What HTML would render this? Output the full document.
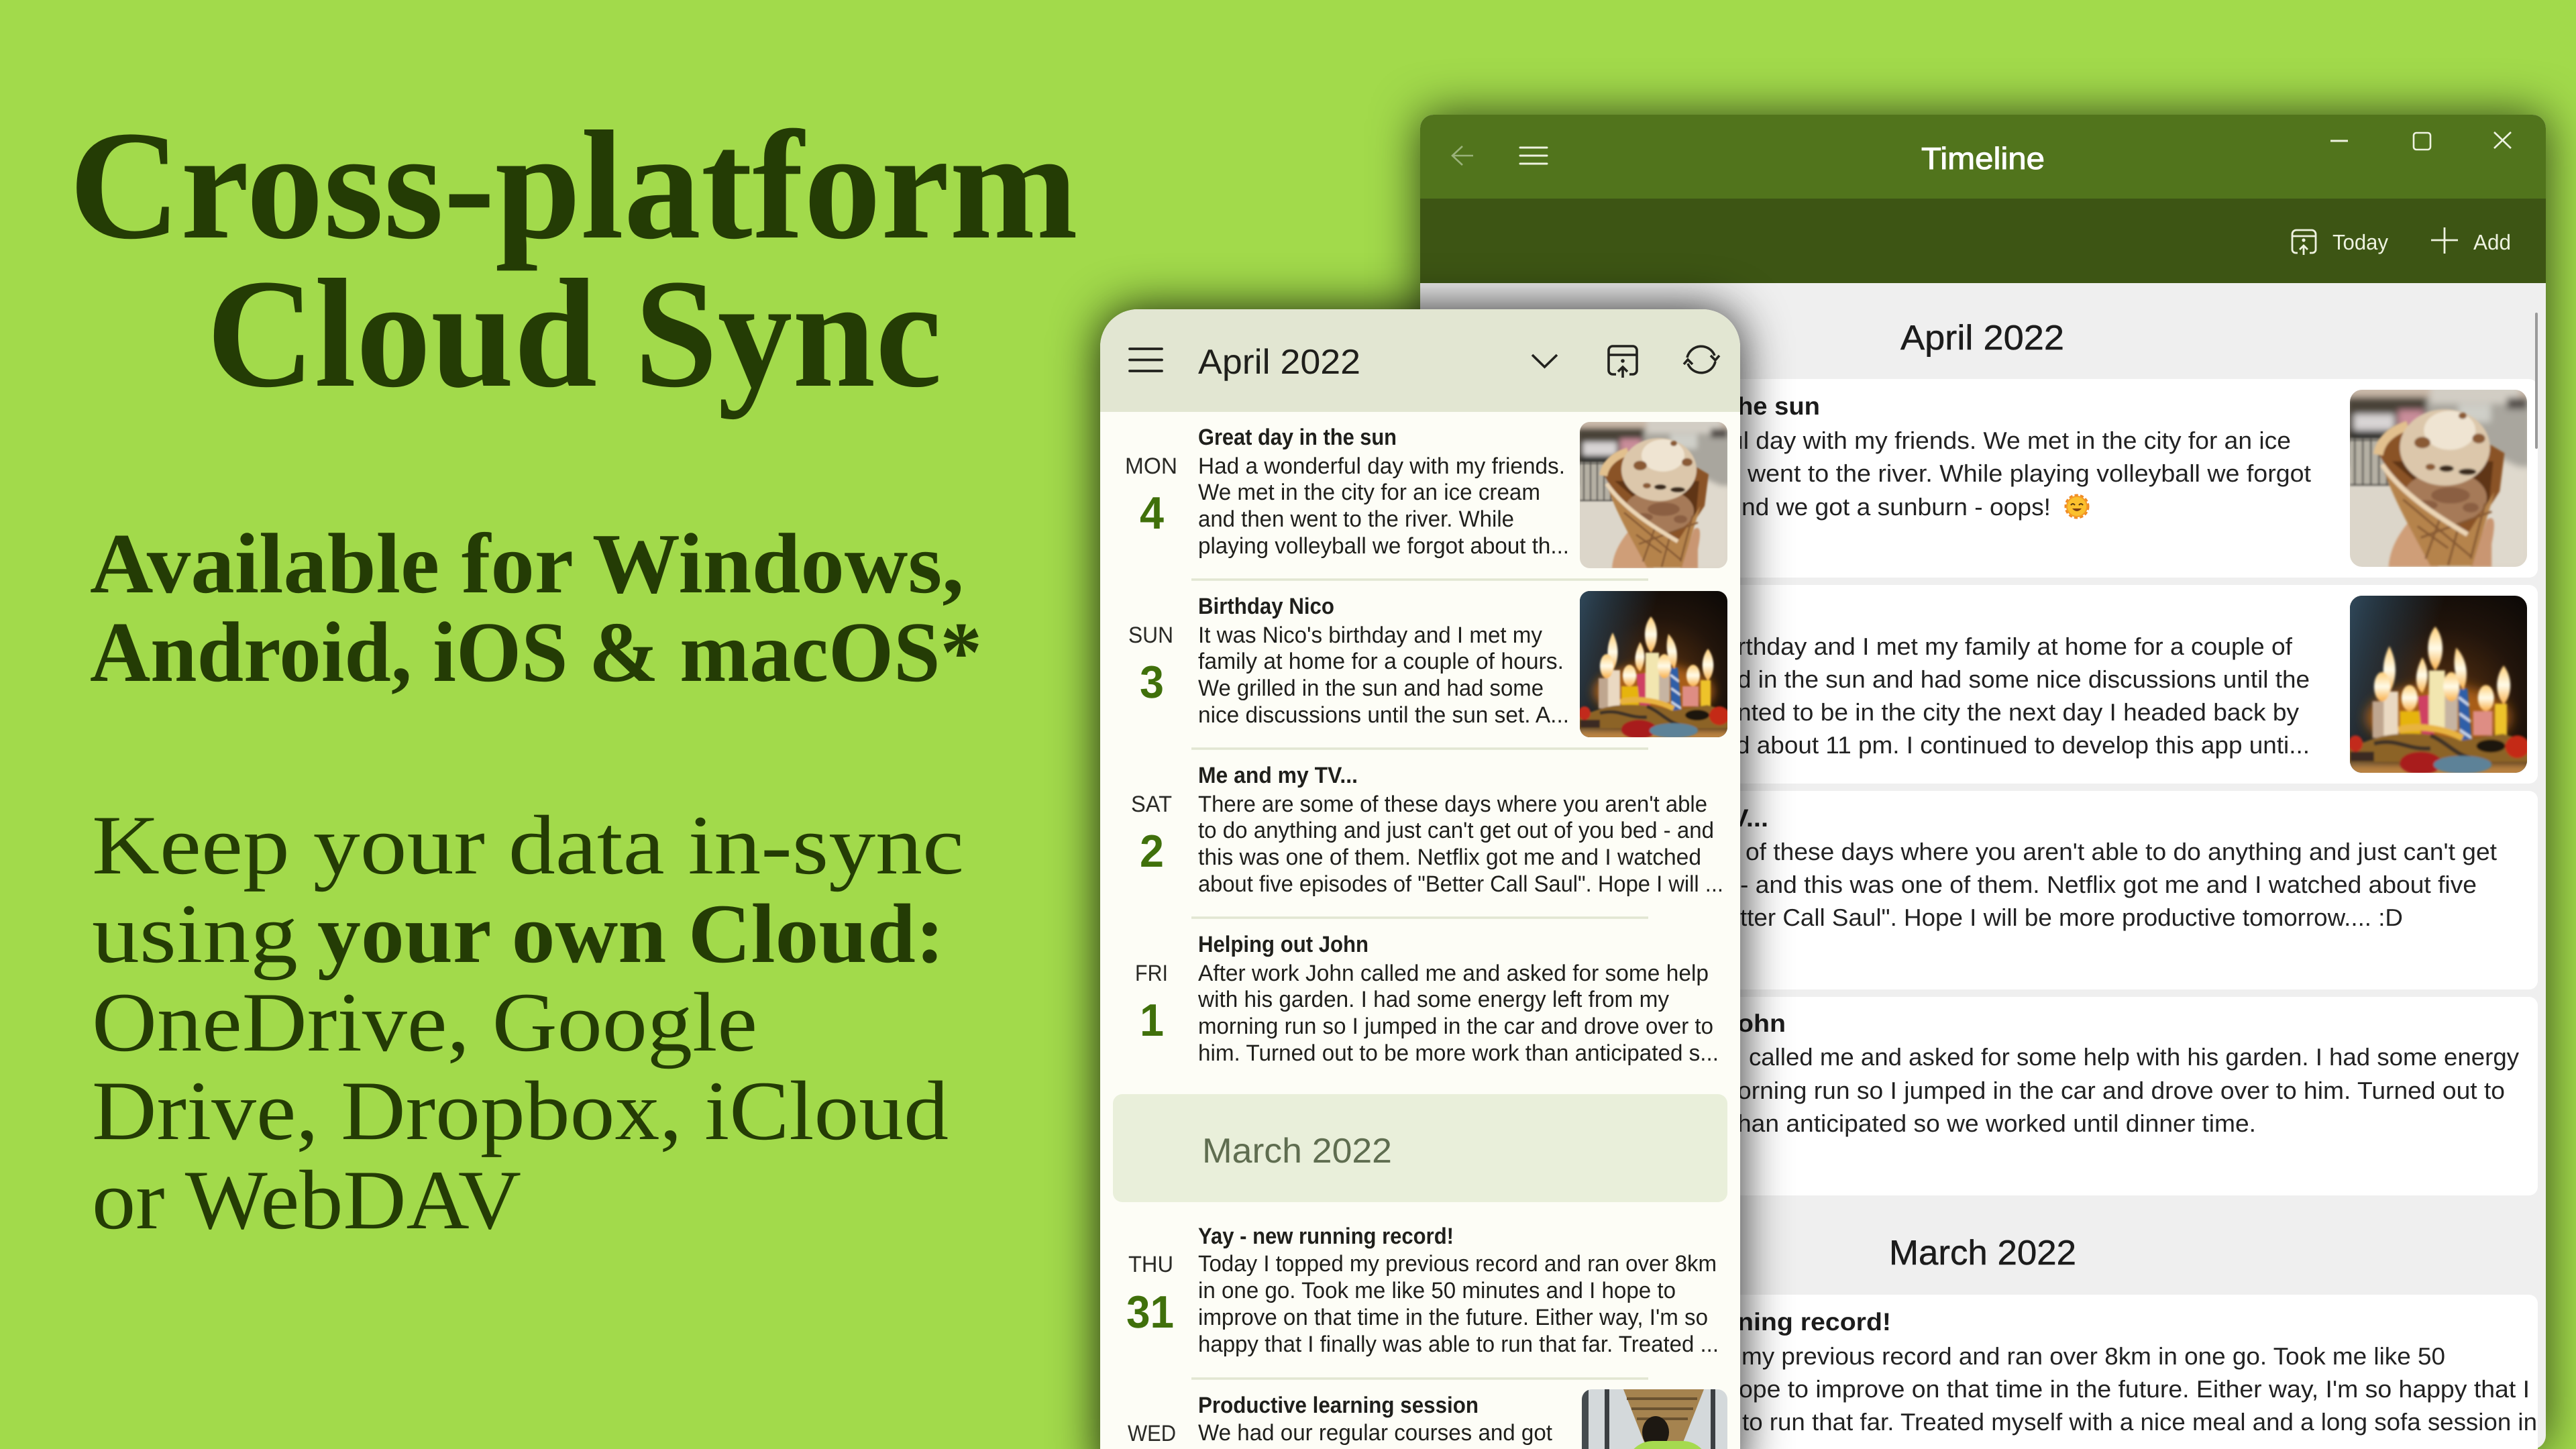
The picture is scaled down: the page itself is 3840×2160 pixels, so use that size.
<!DOCTYPE html>
<html lang="en"><head><meta charset="utf-8"><title>Cross-platform Cloud Sync</title>
<style>
html,body{margin:0;padding:0;width:3840px;height:2160px;overflow:hidden;background:#a2da4b}
#root{position:absolute;left:0;top:0;width:3840px;height:2160px;overflow:hidden;background:#a2da4b}
.l{position:absolute;left:0;top:0;width:3840px;height:2160px;display:block}
svg text{text-rendering:geometricPrecision;white-space:pre}
.s{font-family:"Liberation Serif",serif;fill:#243c05}
.h1{font-size:232px;font-weight:700}.h2{font-size:128px;font-weight:700}.h3{font-size:126px}.b{font-weight:700}
.a{font-family:"Liberation Sans",sans-serif;fill:#1f1f1b}
.t{font-size:34px;font-weight:700}.p{font-size:34px}.d{font-size:34px;fill:#2a2a26}.n{font-size:68px;font-weight:700;fill:#40700b}
.m{font-size:52px}.wt{font-size:37px;font-weight:700;fill:#1c1c1c}.wp{font-size:36px;fill:#222}.wm{font-size:52px;fill:#1c1c1c;stroke:#1c1c1c;stroke-width:.5}
#win{position:absolute;left:2117px;top:171px;width:1678px;height:1989px;background:#efefef;border-radius:20px;box-shadow:0 0 70px rgba(0,0,0,.7);overflow:hidden}
#tb{height:125px;background:#51741c}#tl{height:126px;background:#3d5514}
#ph{position:absolute;left:1640px;top:461px;width:954px;height:1760px;background:#fdfdf6;border-radius:56px;box-shadow:0 0 70px rgba(0,0,0,.85);overflow:hidden}
#phh{height:153px;background:#e2e6d2}
</style></head><body><div id="root">

<svg class="l" viewBox="0 0 3840 2160" xmlns="http://www.w3.org/2000/svg">
<defs>
<filter id="f1" x="-10%" y="-10%" width="120%" height="120%"><feGaussianBlur stdDeviation="4"/></filter>
<filter id="f2" x="-10%" y="-10%" width="120%" height="120%"><feGaussianBlur stdDeviation="1.300"/></filter>
<filter id="f4" x="-100%" y="-100%" width="300%" height="300%"><feGaussianBlur stdDeviation="7"/></filter>
<clipPath id="rc"><rect width="220" height="218" rx="15"/></clipPath>
<radialGradient id="cb" cx=".55" cy=".6" r=".7"><stop offset="0" stop-color="#5a3210"/><stop offset=".6" stop-color="#21140b"/><stop offset="1" stop-color="#0e0a07"/></radialGradient>
<linearGradient id="cl" x1="0" x2="1" y1="0" y2=".3"><stop offset="0" stop-color="#30485a"/><stop offset=".5" stop-color="#30485a" stop-opacity="0"/></linearGradient>
<linearGradient id="fl" x1="0" x2="0" y1="0" y2="1"><stop offset="0" stop-color="#ffcf78"/><stop offset=".5" stop-color="#fffbe8"/><stop offset="1" stop-color="#f9b04a"/></linearGradient>
<symbol id="ice" viewBox="0 0 220 218" preserveAspectRatio="none">
<g clip-path="url(#rc)">
<rect width="220" height="218" fill="#dcd6ca"/>
<g filter="url(#f1)">
<rect x="-5" y="-5" width="230" height="100" fill="#a9a69e"/>
<rect x="-5" y="-5" width="100" height="70" fill="#4a4238"/>
<rect x="-5" y="-5" width="230" height="14" fill="#c9b8a8"/>
<rect x="100" y="-5" width="110" height="22" fill="#d2cdc4"/>
<rect x="5" y="30" width="50" height="22" fill="#d8d4d4"/>
<rect x="60" y="25" width="32" height="22" fill="#c98d9a"/>
<rect x="0" y="50" width="70" height="15" fill="#2a2a26"/>
<rect x="135" y="18" width="40" height="22" fill="#cfcfc8"/>
<rect x="195" y="10" width="25" height="14" fill="#55504c"/>
<polygon points="160,72 220,100 220,218 140,218" fill="#dfd9cd"/>
</g>
<g filter="url(#f2)">
<rect x="0" y="60" width="50" height="58" fill="#b5b0a4"/>
<g stroke="#4b4a44" stroke-width="2"><path d="M6 60V116M16 60V116M26 60V116M36 60V116M46 60V116M0 117H50M0 62H50"/></g>
<path d="M48 218C50 190 66 170 84 150L110 218Z" fill="#cf9e78"/>
<path d="M150 218L170 160C182 152 180 170 176 190L176 218Z" fill="#c99672"/>
<path d="M35 78C38 62 52 50 72 44L120 40 165 62 192 78 186 125 150 180 90 170Z" fill="#8a5226"/>
<path d="M52 88L178 88 172 150 100 130Z" fill="#5f3418"/>
<ellipse cx="118" cy="133" rx="52" ry="33" fill="#a67a58"/>
<g fill="#8b5f42"><ellipse cx="125" cy="130" rx="24" ry="10"/><ellipse cx="95" cy="142" rx="14" ry="6"/><ellipse cx="150" cy="145" rx="10" ry="6"/></g>
<path d="M40 92C66 130 112 158 146 178L180 125 190 92 152 217 100 217C76 172 52 132 40 92Z" fill="#b5834c"/>
<g stroke="#835630" stroke-width="2.500" fill="none"><path d="M66 135L150 205M84 168L122 195M112 158L94 208M134 172L122 216M168 140L150 208M88 182L176 150"/></g>
<path d="M40 92C66 130 112 158 146 178" stroke="#ecd6b6" stroke-width="6" fill="none"/>
<path d="M35 80C38 62 52 50 72 44" stroke="#e2c08e" stroke-width="12" fill="none"/>
<ellipse cx="118" cy="71" rx="56" ry="47" fill="#dcc7ab"/>
<ellipse cx="124" cy="50" rx="32" ry="24" fill="#efe4d2"/>
<g fill="#3b2a1e"><ellipse cx="120" cy="97" rx="9" ry="4"/><ellipse cx="146" cy="101" rx="11" ry="4"/></g>
<g fill="#8a5a35"><ellipse cx="140" cy="32" rx="5" ry="4"/><ellipse cx="160" cy="60" rx="8" ry="6"/><ellipse cx="90" cy="65" rx="10" ry="7"/><ellipse cx="100" cy="95" rx="6" ry="4"/></g>
</g></g>
</symbol>
<symbol id="cnd" viewBox="0 0 220 218" preserveAspectRatio="none">
<g clip-path="url(#rc)">
<rect width="220" height="218" fill="url(#cb)"/>
<rect width="220" height="218" fill="url(#cl)"/>
<g filter="url(#f4)"><ellipse cx="110" cy="150" rx="90" ry="40" fill="#c06a18" opacity=".8"/><rect x="-10" y="205" width="240" height="24" fill="#c58a45"/></g>
<g filter="url(#f2)">
<rect x="38" y="118" width="22" height="58" fill="#ead9c2"/><rect x="28" y="130" width="14" height="45" fill="#bfa68f"/>
<rect x="62" y="142" width="26" height="30" fill="#e6b40e"/>
<polygon points="84,124 99,122 105,170 90,174" fill="#cf3f63"/>
<rect x="98" y="92" width="20" height="72" fill="#f2e6b0"/>
<rect x="118" y="120" width="16" height="46" fill="#c6b4a2"/>
<polygon points="134,115 146,114 152,186 137,186" fill="#2e5ea8"/>
<path d="M135 125L148 135M136 145L150 155M136 165L151 175" stroke="#cfdcee" stroke-width="3"/>
<rect x="153" y="142" width="24" height="30" fill="#de8d84"/>
<rect x="180" y="133" width="15" height="46" fill="#eec32a"/>
<path d="M-5 188L30 176C60 165 110 170 140 178L190 170 225 180V205H-5Z" fill="#8c6428"/>
<path d="M30 182C60 175 70 190 100 188M100 172C120 180 130 195 150 200" stroke="#3c3226" stroke-width="5" fill="none"/>
<path d="M60 165C90 158 120 165 140 175" stroke="#e8b340" stroke-width="8" fill="none"/>
<ellipse cx="175" cy="185" rx="18" ry="8" fill="#1c1510"/>
<ellipse cx="88" cy="206" rx="26" ry="14" fill="#a81a1a"/>
<ellipse cx="208" cy="186" rx="15" ry="14" fill="#c42a12"/>
<ellipse cx="7" cy="182" rx="9" ry="10" fill="#c22a1e"/>
<ellipse cx="140" cy="208" rx="36" ry="11" fill="#5d8298"/>
<path d="M0 192H30V204H0Z" fill="#3b2a20"/>
<g fill="url(#fl)">
<path d="M49 62C58 80 60 100 49 120 38 100 40 80 49 62Z"/>
<ellipse cx="40" cy="112" rx="10" ry="18"/>
<ellipse cx="74" cy="126" rx="10" ry="16"/>
<path d="M90 76C98 90 99 105 90 120 79 112 81 92 90 76Z"/>
<path d="M106 38C118 52 118 78 106 92 94 78 94 52 106 38Z"/>
<ellipse cx="126" cy="112" rx="10" ry="18"/>
<path d="M132 64C146 78 148 100 141 116 130 102 127 84 132 64Z"/>
<ellipse cx="169" cy="126" rx="10" ry="16"/>
<path d="M191 86C202 100 202 122 191 134 180 122 180 100 191 86Z"/>
</g></g>
</g>
</symbol>
</defs>
<g class="s">
<text class="h1" x="103" y="354" textLength="1504" lengthAdjust="spacingAndGlyphs">Cross-platform</text>
<text class="h1" x="308" y="575" textLength="1096" lengthAdjust="spacingAndGlyphs">Cloud Sync</text>
<text class="h2" x="134" y="883" textLength="1303" lengthAdjust="spacingAndGlyphs">Available for Windows,</text>
<text class="h2" x="134" y="1015" textLength="1330" lengthAdjust="spacingAndGlyphs">Android, iOS &amp; macOS*</text>
<text class="h3" x="137" y="1302" textLength="1300" lengthAdjust="spacingAndGlyphs">Keep your data in-sync</text>
<text class="h3" x="137" y="1434" textLength="307" lengthAdjust="spacingAndGlyphs">using</text>
<text class="h3 b" x="473" y="1434" textLength="935" lengthAdjust="spacingAndGlyphs">your own Cloud:</text>
<text class="h3" x="137" y="1566" textLength="992" lengthAdjust="spacingAndGlyphs">OneDrive, Google</text>
<text class="h3" x="137" y="1698" textLength="1277" lengthAdjust="spacingAndGlyphs">Drive, Dropbox, iCloud</text>
<text class="h3" x="137" y="1831" textLength="640" lengthAdjust="spacingAndGlyphs">or WebDAV</text>
</g>
</svg>

<div id="win"><div id="tb"></div><div id="tl"></div></div>

<svg class="l" viewBox="0 0 3840 2160" xmlns="http://www.w3.org/2000/svg">
<path d="M2196 232H2165M2180 218L2165 232 2180 246" fill="none" stroke="#9ab27a" stroke-width="2.600"/>
<path d="M2266 220H2306M2266 232H2306M2266 244H2306" stroke="#eef2e0" stroke-width="3" stroke-linecap="round"/>
<text class="a" x="2864" y="252" font-size="46" stroke="#fff" stroke-width="1" style="fill:#fff" textLength="184" lengthAdjust="spacingAndGlyphs">Timeline</text>
<path d="M3474 210H3500" stroke="#eef2e0" stroke-width="3"/>
<rect x="3598" y="198" width="25" height="25" rx="4" fill="none" stroke="#eef2e0" stroke-width="2.600"/>
<path d="M3718 197L3743 221M3743 197L3718 221" stroke="#eef2e0" stroke-width="2.600"/>
<g fill="none" stroke="#eef2e0" stroke-width="2.800">
<path d="M3425 377H3422a5 5 0 0 1-5-5V349a6 6 0 0 1 6-6H3446a6 6 0 0 1 6 6V372a5 5 0 0 1-5 5H3443"/>
<path d="M3417 352H3452M3434 380V367M3428 372L3434 366 3440 372M3624 358H3664M3644 339V378"/>
</g>
<circle cx="3434" cy="358" r="2.600" fill="#eef2e0"/>
<text class="a" x="3477" y="372" font-size="32" style="fill:#eef2e0" textLength="83" lengthAdjust="spacingAndGlyphs">Today</text>
<text class="a" x="3687" y="372" font-size="32" style="fill:#eef2e0" textLength="56" lengthAdjust="spacingAndGlyphs">Add</text>
<g fill="#fff">
<rect x="2140" y="565" width="1643" height="296" rx="13"/>
<rect x="2140" y="872" width="1643" height="296" rx="13"/>
<rect x="2140" y="1179" width="1643" height="296" rx="13"/>
<rect x="2140" y="1486" width="1643" height="296" rx="13"/>
<rect x="2140" y="1930" width="1643" height="300" rx="13"/>
</g>
<rect x="3779" y="466" width="4" height="203" rx="2" fill="#9a9a9a"/>
<text class="a wm" x="2833" y="521" textLength="244" lengthAdjust="spacingAndGlyphs">April 2022</text>
<text class="a wm" x="2816" y="1885" textLength="279" lengthAdjust="spacingAndGlyphs">March 2022</text>
<use href="#ice" x="3503" y="581" width="264" height="264"/>
<use href="#cnd" x="3503" y="888" width="264" height="264"/>
<g class="a">
<text class="a wt" x="2590" y="618" textLength="123" lengthAdjust="spacingAndGlyphs">he sun</text>
<text class="a wp" x="2578" y="669" textLength="837" lengthAdjust="spacingAndGlyphs">ul day with my friends. We met in the city for an ice</text>
<text class="a wp" x="2605" y="718" textLength="840" lengthAdjust="spacingAndGlyphs">went to the river. While playing volleyball we forgot</text>
<text class="a wp" x="2596" y="768" textLength="461" lengthAdjust="spacingAndGlyphs">nd we got a sunburn - oops!</text>
<text class="a wp" x="2590" y="976" textLength="827" lengthAdjust="spacingAndGlyphs">rthday and I met my family at home for a couple of</text>
<text class="a wp" x="2590" y="1025" textLength="853" lengthAdjust="spacingAndGlyphs">d in the sun and had some nice discussions until the</text>
<text class="a wp" x="2590" y="1074" textLength="837" lengthAdjust="spacingAndGlyphs">nted to be in the city the next day I headed back by</text>
<text class="a wp" x="2588" y="1123" textLength="855" lengthAdjust="spacingAndGlyphs">d about 11 pm. I continued to develop this app unti...</text>
<text class="a wt" x="2580" y="1232" textLength="56" lengthAdjust="spacingAndGlyphs">V...</text>
<text class="a wp" x="2602" y="1282" textLength="1120" lengthAdjust="spacingAndGlyphs">of these days where you aren't able to do anything and just can't get</text>
<text class="a wp" x="2594" y="1331" textLength="1098" lengthAdjust="spacingAndGlyphs">- and this was one of them. Netflix got me and I watched about five</text>
<text class="a wp" x="2594" y="1380" textLength="988" lengthAdjust="spacingAndGlyphs">tter Call Saul". Hope I will be more productive tomorrow.... :D</text>
<text class="a wt" x="2590" y="1538" textLength="72" lengthAdjust="spacingAndGlyphs">ohn</text>
<text class="a wp" x="2607" y="1588" textLength="1148" lengthAdjust="spacingAndGlyphs">called me and asked for some help with his garden. I had some energy</text>
<text class="a wp" x="2590" y="1638" textLength="1144" lengthAdjust="spacingAndGlyphs">orning run so I jumped in the car and drove over to him. Turned out to</text>
<text class="a wp" x="2590" y="1687" textLength="773" lengthAdjust="spacingAndGlyphs">han anticipated so we worked until dinner time.</text>
<text class="a wt" x="2590" y="1983" textLength="229" lengthAdjust="spacingAndGlyphs">ning record!</text>
<text class="a wp" x="2596" y="2034" textLength="1049" lengthAdjust="spacingAndGlyphs">my previous record and ran over 8km in one go. Took me like 50</text>
<text class="a wp" x="2592" y="2083" textLength="1179" lengthAdjust="spacingAndGlyphs">ope to improve on that time in the future. Either way, I'm so happy that I</text>
<text class="a wp" x="2597" y="2132" textLength="1185" lengthAdjust="spacingAndGlyphs">to run that far. Treated myself with a nice meal and a long sofa session in</text>
</g>
<g transform="translate(3096 755)">
<circle r="16" fill="none" stroke="#f08a24" stroke-width="5" stroke-dasharray="5 3"/>
<circle r="15" fill="#fbc02d" stroke="#f39c27" stroke-width="2"/>
<path d="M-9-2q3-4 6 0M3-2q3-4 6 0" fill="none" stroke="#5b3a10" stroke-width="2"/>
<path d="M-7 3q7 8 14 0z" fill="#7a3b10"/>
</g>
</svg>

<div id="ph"><div id="phh"></div></div>

<svg class="l" viewBox="0 0 3840 2160" xmlns="http://www.w3.org/2000/svg">
<path d="M1684 520H1732M1684 536.500H1732M1684 553H1732" stroke="#22221e" stroke-width="3.800" stroke-linecap="round"/>
<text class="a m" x="1786" y="557" textLength="242" lengthAdjust="spacingAndGlyphs">April 2022</text>
<path d="M2284 529L2302.500 547 2321 529" fill="none" stroke="#22221e" stroke-width="3.600"/>
<g fill="none" stroke="#22221e" stroke-width="3.600">
<path d="M2409 558H2404a6 6 0 0 1-6-6V522a6 6 0 0 1 6-6H2434a6 6 0 0 1 6 6V552a6 6 0 0 1-6 6H2429"/>
<path d="M2398 529H2440M2419 563V547M2412 554L2419 547 2426 554"/>
<path d="M2515 533A21.500 21.500 0 0 1 2556 530M2550 530L2557 537 2563 530M2557 539A21.500 21.500 0 0 1 2516 542M2510 543L2516 536 2523 543"/>
</g>
<circle cx="2419" cy="538" r="2.800" fill="#22221e"/>

<path d="M1776 864H2457M1776 1116H2457M1776 1368H2457M1776 2055H2457" stroke="#e2e6d2" stroke-width="3.400"/>
<use href="#ice" x="2355" y="629" width="220" height="218"/>
<use href="#cnd" x="2355" y="881" width="220" height="218"/>
<rect x="1659" y="1631" width="916" height="161" rx="14" fill="#e9efda"/>
<text class="a m" style="fill:#5f6d50" x="1792" y="1733" textLength="283" lengthAdjust="spacingAndGlyphs">March 2022</text>

<text class="a t" x="1786" y="663" textLength="296" lengthAdjust="spacingAndGlyphs">Great day in the sun</text>
<text class="a d" x="1677" y="706" textLength="78" lengthAdjust="spacingAndGlyphs">MON</text>
<text class="a n" x="1699" y="788" textLength="36" lengthAdjust="spacingAndGlyphs">4</text>
<text class="a p" x="1786" y="706" textLength="547" lengthAdjust="spacingAndGlyphs">Had a wonderful day with my friends.</text>
<text class="a p" x="1786" y="745" textLength="510" lengthAdjust="spacingAndGlyphs">We met in the city for an ice cream</text>
<text class="a p" x="1786" y="785" textLength="471" lengthAdjust="spacingAndGlyphs">and then went to the river. While</text>
<text class="a p" x="1786" y="825" textLength="553" lengthAdjust="spacingAndGlyphs">playing volleyball we forgot about th...</text>

<text class="a t" x="1786" y="915" textLength="203" lengthAdjust="spacingAndGlyphs">Birthday Nico</text>
<text class="a d" x="1682" y="958" textLength="67" lengthAdjust="spacingAndGlyphs">SUN</text>
<text class="a n" x="1699" y="1040" textLength="36" lengthAdjust="spacingAndGlyphs">3</text>
<text class="a p" x="1786" y="958" textLength="513" lengthAdjust="spacingAndGlyphs">It was Nico's birthday and I met my</text>
<text class="a p" x="1786" y="997" textLength="545" lengthAdjust="spacingAndGlyphs">family at home for a couple of hours.</text>
<text class="a p" x="1786" y="1037" textLength="515" lengthAdjust="spacingAndGlyphs">We grilled in the sun and had some</text>
<text class="a p" x="1786" y="1077" textLength="553" lengthAdjust="spacingAndGlyphs">nice discussions until the sun set. A...</text>

<text class="a t" x="1786" y="1167" textLength="238" lengthAdjust="spacingAndGlyphs">Me and my TV...</text>
<text class="a d" x="1686" y="1210" textLength="61" lengthAdjust="spacingAndGlyphs">SAT</text>
<text class="a n" x="1699" y="1292" textLength="36" lengthAdjust="spacingAndGlyphs">2</text>
<text class="a p" x="1786" y="1210" textLength="759" lengthAdjust="spacingAndGlyphs">There are some of these days where you aren't able</text>
<text class="a p" x="1786" y="1249" textLength="769" lengthAdjust="spacingAndGlyphs">to do anything and just can't get out of you bed - and</text>
<text class="a p" x="1786" y="1289" textLength="750" lengthAdjust="spacingAndGlyphs">this was one of them. Netflix got me and I watched</text>
<text class="a p" x="1786" y="1329" textLength="783" lengthAdjust="spacingAndGlyphs">about five episodes of "Better Call Saul". Hope I will ...</text>

<text class="a t" x="1786" y="1419" textLength="254" lengthAdjust="spacingAndGlyphs">Helping out John</text>
<text class="a d" x="1692" y="1462" textLength="49" lengthAdjust="spacingAndGlyphs">FRI</text>
<text class="a n" x="1699" y="1544" textLength="36" lengthAdjust="spacingAndGlyphs">1</text>
<text class="a p" x="1786" y="1462" textLength="761" lengthAdjust="spacingAndGlyphs">After work John called me and asked for some help</text>
<text class="a p" x="1786" y="1501" textLength="702" lengthAdjust="spacingAndGlyphs">with his garden. I had some energy left from my</text>
<text class="a p" x="1786" y="1541" textLength="768" lengthAdjust="spacingAndGlyphs">morning run so I jumped in the car and drove over to</text>
<text class="a p" x="1786" y="1581" textLength="776" lengthAdjust="spacingAndGlyphs">him. Turned out to be more work than anticipated s...</text>

<text class="a t" x="1786" y="1854" textLength="381" lengthAdjust="spacingAndGlyphs">Yay - new running record!</text>
<text class="a d" x="1682" y="1896" textLength="67" lengthAdjust="spacingAndGlyphs">THU</text>
<text class="a n" x="1679" y="1979" textLength="71" lengthAdjust="spacingAndGlyphs">31</text>
<text class="a p" x="1786" y="1895" textLength="773" lengthAdjust="spacingAndGlyphs">Today I topped my previous record and ran over 8km</text>
<text class="a p" x="1786" y="1935" textLength="712" lengthAdjust="spacingAndGlyphs">in one go. Took me like 50 minutes and I hope to</text>
<text class="a p" x="1786" y="1975" textLength="760" lengthAdjust="spacingAndGlyphs">improve on that time in the future. Either way, I'm so</text>
<text class="a p" x="1786" y="2015" textLength="776" lengthAdjust="spacingAndGlyphs">happy that I finally was able to run that far. Treated ...</text>

<text class="a t" x="1786" y="2106" textLength="418" lengthAdjust="spacingAndGlyphs">Productive learning session</text>
<text class="a d" x="1681" y="2148" textLength="72" lengthAdjust="spacingAndGlyphs">WED</text>
<text class="a p" x="1786" y="2147" textLength="528" lengthAdjust="spacingAndGlyphs">We had our regular courses and got</text>

<clipPath id="rc3"><rect x="2358" y="2071" width="217" height="120" rx="15"/></clipPath>
<g clip-path="url(#rc3)">
<rect x="2358" y="2071" width="217" height="95" fill="#d4d9db"/>
<polygon points="2420,2071 2540,2071 2505,2160 2455,2160" fill="#a5834f"/>
<path d="M2425 2085H2530M2432 2100H2524M2440 2115H2516" stroke="#6a5230" stroke-width="4"/>
<rect x="2358" y="2071" width="10" height="95" fill="#454b4f"/>
<rect x="2392" y="2071" width="7" height="95" fill="#3b3f42"/>
<rect x="2550" y="2071" width="7" height="95" fill="#3b3f42"/>
<ellipse cx="2468" cy="2135" rx="20" ry="24" fill="#1d1812"/>
</g>
<rect x="2424" y="2148" width="124" height="80" rx="40" fill="#a5da4f"/>
</svg>
</div></body></html>
